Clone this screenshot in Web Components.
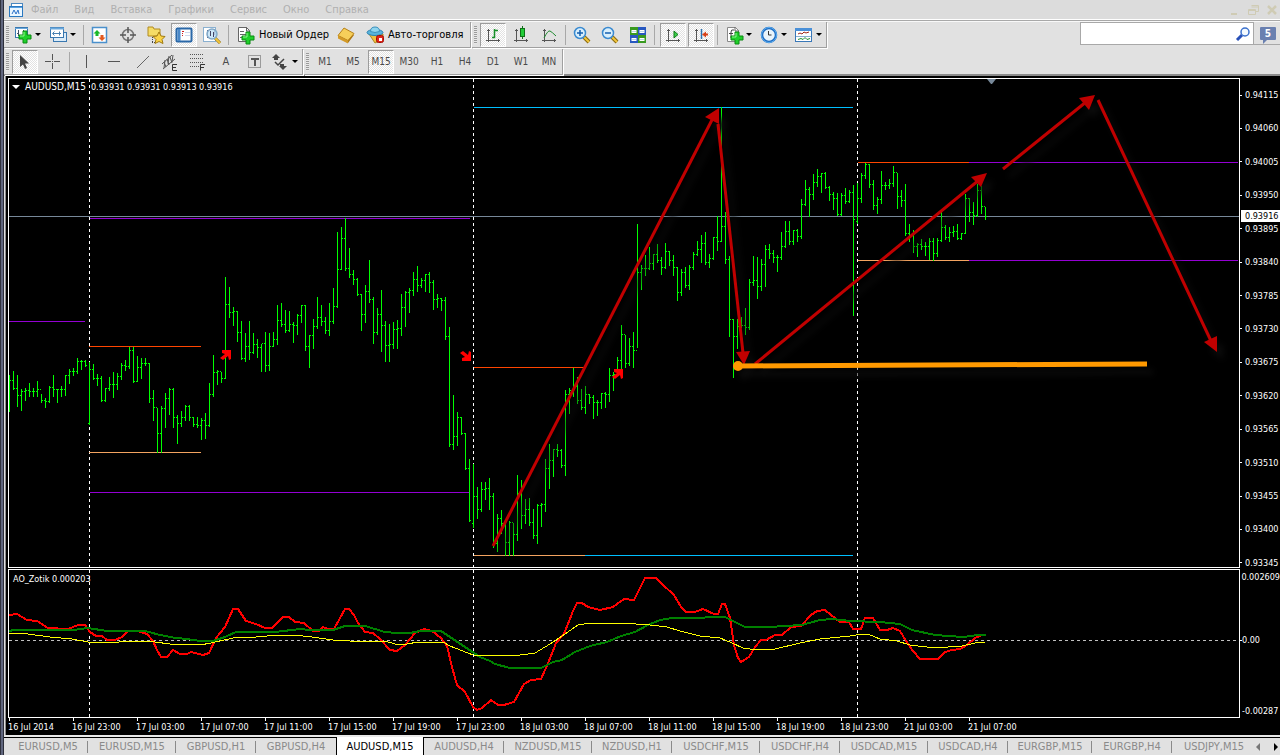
<!DOCTYPE html>
<html lang="ru">
<head>
<meta charset="utf-8">
<title>AUDUSD,M15</title>
<style>
html, body { margin: 0; height: 100%; background: #000; }
body { font: 11px/13px "DejaVu Sans Condensed", Roboto, sans-serif; }
</style>
</head>
<body>
<trade-app></trade-app>
<script>
const define = (name, html, setup) => {
  const tpl = document.createElement('template');
  tpl.innerHTML = html;
  customElements.define(name, class extends HTMLElement {
    constructor() {
      super();
      this.attachShadow({ mode: 'open' }).appendChild(tpl.content.cloneNode(true));
    }
    connectedCallback() {
      if (setup && !this.ready) { this.ready = true; setup(this, this.shadowRoot); }
    }
  });
};

const plus = (x, y) => `<path d="M${x + 4} ${y}h4v4h4v4h-4v4h-4v-4h-4v-4h4z" fill="#1fd02a" stroke="#0a8a12"/><path d="M${x + 5} ${y + 1}v4h-4" fill="none" stroke="#8df58d"/>`;
const lens = (inner) => `<path d="M12 12l5 5" stroke="#8a6a10" stroke-width="4"/><path d="M12 12l5 5" stroke="#f2c63c" stroke-width="2"/><circle cx="8" cy="8" r="5.500" fill="#d9effc" stroke="#3a8ad0" stroke-width="1.500"/><path d="${inner}" stroke="#1560b0" stroke-width="1.500" fill="none"/>`;
const axes = '<path d="M5.500 4v13M3 15.500h14M4 5.500h3M15.500 14v3" stroke="#555" fill="none"/>';
const page = '<path d="M3.500 2.500h8l3 3v11h-11z" fill="#fff" stroke="#888"/><path d="M11 2v4h4" fill="none" stroke="#666"/>';
const ICONS = {
  newchart: '<rect x="2.500" y="2.500" width="12" height="10" fill="#fff" stroke="#3a78b0"/><path d="M2 3.500h13" stroke="#6aa8dc"/><path d="M5.500 5v6M10.500 5v6M4 8.500h2M10 7.500h2" stroke="#456"/>' + plus(6, 6),
  profiles: '<rect x="5.500" y="7.500" width="13" height="9" fill="#dcecf8" stroke="#3a78b0"/><rect x="2.500" y="2.500" width="13" height="10" fill="#fff" stroke="#3a78b0"/><path d="M2 3.500h14" stroke="#6aa8dc" stroke-width="2"/><path d="M5 8.500h8M6.500 6.500l-2 2 2 2M11.500 6.500v4" fill="none" stroke="#4880b0"/>',
  market: '<rect x="2.500" y="2.500" width="14" height="15" fill="#fff" stroke="#4a90cc" stroke-width="1.500"/><path d="M7 5l3.500 3.500h-2v2.500h-3v-2.500h-2z" fill="#19b82a"/><path d="M12 16l3.500-3.500h-2v-2.500h-3v2.500h-2z" fill="#e25a20"/>',
  target: '<circle cx="10" cy="10" r="5.500" fill="none" stroke="#777" stroke-width="1.500"/><path d="M10 2v6M10 12v6M2 10h6M12 10h6" stroke="#555" stroke-width="1.500"/>',
  favorites: '<path d="M2 2h5l1 2h6v7h-12z" fill="#f5dc66" stroke="#b08a20"/><path d="M6.500 12v6M6 17.500h4" stroke="#444" stroke-dasharray="1 1"/><path d="M13 7l2 4 4 .5-3 3 1 4-4-2-4 2 1-4-3-3 4-.5z" fill="#fbd448" stroke="#a07a10"/>',
  navigator: '<rect x="2.500" y="3.500" width="15" height="13" rx="1" fill="#fff" stroke="#2a68a8" stroke-width="2"/><path d="M5 4v12" stroke="#4a88c8" stroke-width="3"/><path d="M8 6.500h2M8 8.500h1M8 10.500h1" stroke="#d02020"/><path d="M11 7.500h5M11 10.500h5" stroke="#ccd8ee"/>',
  tester: '<rect x="1.500" y="2.500" width="12" height="14" fill="#fff" stroke="#8ab0d0"/><path d="M5.500 5v8M12.500 4v6" stroke="#557"/><path d="M13 13l5 5" stroke="#8a6a10" stroke-width="3"/><path d="M13 13l5 5" stroke="#f2c63c" stroke-width="2"/><circle cx="10" cy="9" r="5" fill="#bfe0f6" fill-opacity=".8" stroke="#80a8c8" stroke-width="1.500"/><path d="M8.500 6v5M11.500 7v5" stroke="#446"/>',
  neworder: '<path d="M2.500 2.500h8l3 3v11h-11z" fill="#fff" stroke="#666"/><path d="M10.500 2v4h3M4 6.500h4M4 9.500h7M4 12.500h7" fill="none" stroke="#666"/>' + plus(6, 7),
  gold: '<path d="M2 12l6-8 10 6-6 8z" fill="#a87410"/><path d="M2 10.500l6-7.500 10 5.500-6 7z" fill="#f6cf5a" stroke="#b8821a"/><path d="M2 10.500l10 5v3l-10-5z" fill="#d39a28"/>',
  expert: '<path d="M4 9l6 9 8-4v-5z" fill="#f0c040" stroke="#b08820"/><ellipse cx="10" cy="7.500" rx="8" ry="3" fill="#58b4dc" stroke="#2a80b0"/><path d="M5.500 6.500q0-4.500 4.500-4.500t4.500 4.500q-4.500 2-9 0" fill="#8ed4ee" stroke="#3a90bc"/><rect x="11.500" y="10.500" width="7" height="7" rx="2" fill="#e02418" stroke="#a01008"/><rect x="14" y="13" width="3" height="3" fill="#fff"/>',
  bars: axes + '<path d="M11.500 4v9M9 12.500h3M12 5.500h3" stroke="#18902a" stroke-width="1.500"/>',
  candles: axes + '<path d="M11.500 1v13" stroke="#107018"/><rect x="9.500" y="3.500" width="4" height="8" fill="#22cc38" stroke="#107018"/>',
  line: axes + '<path d="M5 13q4-8 6-7t6 5" fill="none" stroke="#208a30"/>',
  zoomin: lens('M5 8h6M8 5v6'),
  zoomout: lens('M5 8h6'),
  tile: '<rect x="2" y="2" width="8" height="8" fill="#3a9a20"/><rect x="10" y="2" width="8" height="8" fill="#2858c0"/><rect x="2" y="10" width="8" height="8" fill="#2858c0"/><rect x="10" y="10" width="8" height="8" fill="#3a9a20"/><path d="M3.500 6.500h5M11.500 6.500h5M3.500 14.500h5M11.500 14.500h5" stroke="#fff" stroke-width="3"/><path d="M4 6.500h4M12 6.500h4M4 14.500h4M12 14.500h4" stroke="#b8d8e8"/>',
  autoscroll: axes + '<path d="M11 6l4 3.500-4 3.500z" fill="#38d048" stroke="#107818"/>',
  shift: axes + '<path d="M10.500 4v10" stroke="#2a70b0" stroke-width="1.500"/><path d="M11 9.500l4-3v2h2v2h-2v2z" fill="#d84018"/>',
  indicators: page + '<path d="M10 5q-3-1-3 2v6M5 8.500h4" fill="none" stroke="#444"/>' + plus(7, 7),
  clock: '<circle cx="10" cy="10" r="7" fill="#e8f4fc" stroke="#1c6cc4" stroke-width="2.500"/><circle cx="10" cy="10" r="7.500" fill="none" stroke="#60b0f0"/><path d="M9.500 6v4h3" fill="none" stroke="#333"/>',
  template: '<rect x="1.500" y="3.500" width="16" height="13" fill="#fff" stroke="#3a78b8"/><path d="M1 4.500h17" stroke="#4a90d8" stroke-width="3"/><path d="M2 11.500h15" stroke="#8ab0d0"/><path d="M4 9l2-1 2 1 2-2 2 1 3-1" fill="none" stroke="#a02818"/><path d="M4 14.500l3-1 2 1 2-2 2 2 3-1" fill="none" stroke="#209030"/>',
  cursor: '<path d="M5 3v12l3-2.500 2 4.500 2-1-2-4.500h4z" fill="#444"/>',
  cross: '<path d="M9.500 2v6M9.500 11v6M2 9.500h6M11 9.500h6" stroke="#555"/><rect x="9" y="9" width="1" height="1" fill="#555"/>',
  vline: '<path d="M10.500 3v13" stroke="#555"/>',
  hline: '<path d="M4 9.500h12" stroke="#555"/>',
  trend: '<path d="M5 16L17 4" stroke="#666"/>',
  channel: '<path d="M2 12L12 3M3 17L15 7M4 10l2 5M7 7l2 6M10 5l2 6M5 8l-1 8M9 4l-1 8M13 3l-1 7" stroke="#555"/><path d="M17 12.500h-4.500v6h4.500M12 15.500h4" fill="none" stroke="#333"/>',
  fibo: '<path d="M2 2.500h14M2 6.500h14M2 10.500h14M2 14.500h9" stroke="#555" stroke-dasharray="1 1"/><path d="M17 12.500h-4.500v6M12 15.500h4" fill="none" stroke="#333"/>',
  label: '<rect x="4.500" y="3.500" width="12" height="12" fill="none" stroke="#555" stroke-dasharray="1 1"/><path d="M7 6h8v2h-3v6h-2v-6h-3z" fill="#555"/>',
  arrows: '<path d="M2 6l4-4 4 4-2 0v2l-4 0v-2zM10 14l0-2h4v2h3l-4 4-4-4z" fill="#444"/><path d="M5 10l3 3 6-6" fill="none" stroke="#444" stroke-width="1.500"/>',
  minimize: '<path d="M5 12h6" stroke="#cfcbb4" stroke-width="2"/>',
  restore: '<path d="M6.500 3.500h7v6h-3M6.500 5h7M3.500 7.500h7v5h-7zM4 8.500h6" fill="none" stroke="#cfcbb4"/>',
  close: '<path d="M4 4l8 8M12 4l-8 8" stroke="#cfcbb4" stroke-width="2.500"/>',
  app: '<rect x="3.500" y="1.500" width="11" height="10" fill="#fff" stroke="#4a88c0"/><rect x="1.500" y="4.500" width="13" height="10" fill="#eaf6ff" stroke="#2a78c0"/><path d="M2 5.500h12" stroke="#58a0e0"/><path d="M4 12l2-4 2 4 2-4 1 4" fill="none" stroke="#2a70c8"/>',
  search: '<path d="M2 14l5-5" stroke="#2850b8" stroke-width="3"/><circle cx="10" cy="6" r="4" fill="#f4faff" stroke="#3a70cc" stroke-width="1.500"/>'
};

define('tool-icon', `<style>
:host { display: block; width: 20px; height: 20px; flex: none; }
:host([small]) { width: 16px; height: 16px; }
svg { display: block; width: 100%; height: 100%; }
</style><svg aria-hidden="true"></svg>`, (el, root) => {
  const svg = root.querySelector('svg');
  const s = el.hasAttribute('small') ? 16 : 20;
  svg.setAttribute('viewBox', `0 0 ${s} ${s}`);
  svg.innerHTML = ICONS[el.getAttribute('name')] || '';
});

define('tool-button', `<style>
:host { display: block; flex: none; width: 26px; height: 24px; }
:host([menu]) { width: 33px; }
:host([wide]) { width: 99px; }
:host([wider]) { width: 107px; }
button { box-sizing: border-box; width: 100%; height: 100%; margin: 0; padding: 0; border: 1px solid transparent; background: none; font: inherit; color: #4a4a4a; display: flex; align-items: center; justify-content: center; white-space: nowrap; }
:host([menu]) button { justify-content: flex-start; gap: 2px; }
:host([wide]) button, :host([wider]) button { justify-content: flex-start; gap: 3px; padding-left: 3px; color: #000; }
:host([pressed]) button { border-color: #9c9c9c #fff #fff #9c9c9c; background: repeating-conic-gradient(#fff 0 25%, #e2e2e2 0 50%) 0 0 / 2px 2px; }
i { display: none; border: 3px solid transparent; border-top-color: #000; border-bottom: 0; }
:host([menu]) i { display: block; }
</style><button type="button"><slot></slot><i></i></button>`, (el, root) => {
  const b = root.querySelector('button');
  const n = el.getAttribute('icon');
  if (n) {
    b.insertAdjacentHTML('afterbegin', `<tool-icon name="${n}"></tool-icon>`);
    if (!el.textContent.trim()) b.setAttribute('aria-label', n);
  }
  if (el.hasAttribute('pressed')) b.setAttribute('aria-pressed', 'true');
});

define('tool-sep', `<style>
:host { display: block; flex: none; width: 3px; height: 20px; }
:host([wide]) { width: 5px; }
span { display: block; width: 1px; height: 100%; margin-left: 1px; background: #a8a8a8; }
</style><span></span>`);

define('tool-bar', `<style>
:host { display: flex; flex: none; align-items: center; gap: 2px; height: 25px; padding: 0 2px; background: #e1e1e1; border-right: 1px solid #a0a0a0; border-bottom: 1px solid #a0a0a0; box-shadow: 1px 1px #fff; margin-right: 1px; }
:host([tight]) { padding-right: 0; }
.grip { flex: none; width: 3px; height: 18px; margin-right: 1px; background: repeating-linear-gradient(#9a9a9a 0 1px, #e8e8e8 1px 2px); }
</style><span class="grip"></span><slot></slot>`);

define('menu-bar', `<style>
:host { display: flex; align-items: center; height: 19px; padding: 0 0 0 4px; background: #dcdcdc; color: #b0b0b0; }
nav { display: flex; flex: 1; gap: 16px; margin-left: 7px; }
.win { display: flex; gap: 3px; }
button { margin: 0; padding: 0; border: 0; background: none; font: inherit; color: inherit; }
</style>
<tool-icon small name="app"></tool-icon>
<nav></nav>
<div class="win"><button aria-label="minimize"><tool-icon small name="minimize"></tool-icon></button><button aria-label="restore"><tool-icon small name="restore"></tool-icon></button><button aria-label="close"><tool-icon small name="close"></tool-icon></button></div>`,
(el, root) => {
  root.querySelector('nav').innerHTML = el.getAttribute('items').split('|').map(t => `<button type="button">${t}</button>`).join('');
});

define('search-box', `<style>
:host { display: flex; flex: none; height: 23px; width: 200px; }
label { box-sizing: border-box; display: flex; align-items: center; flex: 1; background: #fff; border: 1px solid #a8a8a8; padding-right: 2px; }
input { flex: 1; min-width: 0; border: 0; padding: 0 4px; margin: 0; outline: 0; font: inherit; background: none; }
button { flex: none; width: 26px; margin: 0; padding: 0 0 0 6px; border: 0; border-bottom: 1px solid #a8a8a8; background: #e1e1e1; font: bold 10px/14px "DejaVu Sans Condensed", sans-serif; color: #fff; text-align: left; }
span { display: block; position: relative; width: 16px; height: 13px; line-height: 13px; text-align: center; background: #6a80b0; border-radius: 1px; }
span::after { content: ""; position: absolute; left: 3px; top: 13px; border: 2px solid transparent; border-top-color: #6a80b0; border-left-color: #6a80b0; }
</style><label><input type="text" aria-label="search"><tool-icon small name="search"></tool-icon></label><button type="button"><span>5</span></button>`);

/* Each bar is high, low, close; a bar opens at the previous close. */
const BARS = `375 411 380,371 389 388,375 406 395,389 410 391,388 400 390,383 396 391,388 396 391,381 396 389,394 402 400,398 407 401,386 402 387,375 396 389,389 402 389,386 396 389,375 395 375,369 383 371,368 375 371,358 373 361,360 369 361,360 366 365,362 424 369,364 379 378,374 385 378,376 401 400,388 401 388,377 390 384,372 397 384,373 389 376,363 379 365,360 370 366,347 368 350,347 382 381,356 381 367,358 378 363,358 365 363,363 402 398,390 420 407,408 452 433,406 452 408,393 427 398,388 414 389,388 427 417,415 443 423,411 426 417,405 420 406,405 420 417,417 426 424,417 427 425,418 439 420,413 438 425,383 426 394,355 396 372,370 384 371,372 382 378,277 378 304,287 317 312,307 325 311,311 341 332,321 359 358,333 361 346,321 359 352,333 353 344,339 357 347,344 371 343,332 371 365,333 370 346,332 346 339,305 344 320,303 326 324,310 332 330,311 331 324,322 342 325,314 334 315,305 322 305,305 350 346,335 367 335,319 348 326,297 328 317,305 325 321,317 333 330,303 335 321,288 323 306,232 307 269,227 269 238,218 270 268,248 277 274,270 284 279,278 295 294,294 330 314,285 322 291,260 302 299,297 343 332,308 334 314,290 351 325,321 361 345,324 361 344,322 348 329,320 348 328,294 335 307,291 326 292,288 312 290,272 295 279,266 291 285,278 287 280,274 291 274,272 292 282,280 309 299,294 307 298,298 310 300,297 339 336,327 446 444,395 449 436,412 445 417,417 434 433,433 469 468,459 521 520,464 527 496,487 518 509,482 511 489,482 499 488,478 509 496,493 547 543,514 551 518,510 533 523,523 555 542,521 555 522,523 555 534,475 540 493,480 528 515,499 523 509,498 525 522,509 538 535,504 543 505,503 526 504,459 511 468,444 488 460,449 476 449,444 456 450,449 467 465,390 475 394,388 413 390,368 396 386,377 403 400,389 409 407,386 413 394,394 403 397,395 418 402,400 415 402,393 408 393,392 407 394,368 401 375,372 390 374,357 375 360,325 369 334,335 367 363,338 365 346,332 367 350,224 347 272,265 289 268,255 275 268,247 269 263,254 269 254,244 262 260,257 274 267,243 268 251,251 265 260,255 275 267,267 300 292,269 295 272,267 287 285,265 289 267,252 269 254,241 255 249,235 262 243,232 264 262,254 267 258,237 259 237,216 250 241,107 241 226,212 263 259,256 336 319,319 377 336,319 348 326,317 327 325,308 334 327,279 329 282,256 285 280,257 298 286,259 290 264,245 286 249,244 258 253,250 262 257,255 271 257,232 259 246,221 247 231,221 244 241,230 244 230,229 241 236,199 238 204,180 205 189,187 216 194,174 199 182,169 186 176,173 192 173,172 188 187,186 200 194,192 209 198,193 215 214,193 215 195,188 203 201,190 202 192,185 315 219,183 223 198,173 202 175,163 178 164,164 187 184,180 209 205,197 213 199,171 203 185,182 189 185,179 188 183,166 186 172,173 208 196,190 206 200,184 235 233,224 241 235,230 252 246,243 256 244,239 249 246,242 255 246,238 259 241,238 260 253,238 256 240,212 241 227,225 239 237,227 241 232,226 236 231,224 239 238,233 239 233,194 233 198,198 221 212,202 224 215,184 216 190,186 213 206,207 219 216`;
const GAP_OPENS = { 89: 423, 473: 523, 857: 221 };
const barPath = () => {
  let x = 9, prev = 0, d = '';
  for (const row of BARS.split(',')) {
    const [h, l, c] = row.split(' ').map(Number);
    const o = GAP_OPENS[x] || prev;
    d += `M${x} ${h}h1v${l - h + 1}h-1z`;
    if (o) d += `M${x - 1} ${o}h1v1h-1z`;
    d += `M${x + 1} ${c}h1v1h-1z`;
    prev = c; x += 4;
  }
  return d;
};
const LEVELS = [
  [9, 1239, 216, '#778899'], [90, 470, 218, '#9400d3'], [9, 85, 321, '#9400d3'], [90, 470, 492, '#9400d3'],
  [89, 201, 346, '#ff4500'], [89, 201, 452, '#f4a460'], [474, 585, 367, '#ff4500'], [474, 585, 555, '#f4a460'],
  [585, 853, 555, '#00bfff'], [474, 853, 107, '#00bfff'], [858, 969, 162, '#ff4500'], [969, 1238, 162, '#9400d3'],
  [858, 969, 260, '#f4a460'], [969, 1238, 260, '#9400d3']
];
const days = (y, h) => [89, 473, 857].map(x => `<path d="M${x}.5 ${y}v${h}" stroke="#fff" stroke-dasharray="3 3"/>`).join('');
const trendArrow = (line, head) => `<path d="${line}" stroke="#c00000" stroke-width="3" fill="none"/><path d="${head}z" fill="#c00000"/>`;
const signal = (x, y, flip) => `<path transform="translate(${x} ${y})${flip ? ' scale(1 -1)' : ''}" d="M2 -5h9v9l-2 1-1-4-5 4-3-2 5-4-3-1z" fill="#f00"/>`;

define('price-chart', `<style>
:host { display: block; min-width: 0; flex: 1; box-sizing: border-box; border: 1px solid #fff; position: relative; background: #000; color: #fff; overflow: hidden; }
svg { display: block; position: absolute; inset: 0; width: 100%; height: 100%; }
header { position: absolute; z-index: 1; left: 3px; top: 2px; display: flex; align-items: center; gap: 5px; font-size: 10px; line-height: 12px; white-space: nowrap; }
header i { border: 4px solid transparent; border-top-color: #fff; border-bottom: 0; }
header small { font-size: 9px; }
</style><header><i></i><span>AUDUSD,M15</span><small>0.93931 0.93931 0.93913 0.93916</small></header>
<svg viewBox="9 79 1230 488" preserveAspectRatio="none" role="img" aria-label="AUDUSD"></svg>`, (el, root) => {
  root.querySelector('svg').innerHTML =
    `<g shape-rendering="crispEdges">${days(79, 488)}` +
    LEVELS.map(([a, b, y, c]) => `<rect x="${a}" y="${y}" width="${b - a}" height="1" fill="${c}"/>`).join('') +
    `<path d="${barPath()}" fill="#0f0"/></g>` +
    '<path d="M987 79h9l-4 5h-1z" fill="#778899"/>' +
    signal(220, 355) + signal(460, 356, true) + signal(612, 374) +
    '<g style="filter:drop-shadow(6px 8px 3px #0c0c0c)">' +
    trendArrow('M493 546L714 116', 'M719 108L705 117L719 124') +
    trendArrow('M718 124L743 353', 'M744 365L736 352L750 351') +
    trendArrow('M755 364L979 180', 'M987 173L971 177L981 187') +
    trendArrow('M1003 169L1086 102', 'M1095 95L1079 98L1089 110') +
    trendArrow('M1098 100L1211 341', 'M1217 352L1204 342L1217 336') +
    '<path d="M738 366L1147 364" stroke="#ff9900" stroke-width="5"/><circle cx="738" cy="366" r="5" fill="#ff9900"/></g>';
});

define('oscillator-chart', `<style>
:host { display: block; min-width: 0; flex: 1; box-sizing: border-box; border: 1px solid #fff; position: relative; background: #000; color: #fff; overflow: hidden; }
svg { display: block; position: absolute; inset: 0; width: 100%; height: 100%; }
header { position: absolute; left: 4px; top: 3px; font-size: 9px; line-height: 12px; white-space: nowrap; }
</style><header>AO_Zotik 0.000203</header>
<svg viewBox="9 570 1230 147" preserveAspectRatio="none" role="img" aria-label="AO_Zotik">
<g fill="none" shape-rendering="crispEdges">
<path d="M9 640.500H1239" stroke="#c0c0c0" stroke-dasharray="3 3"/>
<polyline stroke="#ff0000" stroke-width="2" points="9,615 17,614 27,620 37,621 48,628 68,629 78,625 85,625 90,632 96,636 102,636 107,640 115,640 122,637 128,631 138,631 147,634 153,641 157,650 161,657 167,657 173,650 180,654 187,654 191,652 203,655 209,653 216,638 225,627 233,609 238,609 246,621 256,624 265,628 272,628 283,617 289,617 295,622 304,623 313,631 319,631 323,627 328,629 334,629 345,609 349,609 354,615 358,623 365,632 373,633 380,639 390,650 397,651 405,645 415,633 424,629 432,631 441,638 447,646 452,667 457,685 465,692 473,707 477,710 482,708 491,700 498,705 504,705 514,702 524,684 531,680 541,679 549,661 556,643 564,634 573,611 577,603 582,603 588,607 600,610 613,607 624,599 634,600 645,578 656,578 662,584 674,595 681,607 686,612 695,612 703,609 714,614 718,614 722,604 725,604 730,618 734,645 738,658 741,662 749,657 755,647 761,640 766,640 775,635 782,635 791,627 801,626 811,615 817,611 825,610 831,615 840,622 849,622 853,629 861,629 865,618 873,618 880,630 887,630 893,628 900,631 906,641 913,651 920,659 938,659 945,652 952,650 960,649 967,645 975,638 982,635"/>
<polyline stroke="#008000" stroke-width="2" points="9,631 14,630 73,630 88,628 107,631 145,631 160,635 176,638 187,639 200,641 213,641 225,637 236,632 275,632 300,629 310,630 333,630 345,626 365,626 385,632 397,633 410,633 420,631 441,631 453,639 468,649 480,657 490,661 495,664 510,668 541,668 553,662 562,660 575,652 590,646 607,642 621,636 635,632 648,625 660,620 672,618 700,618 710,617 725,617 735,622 745,627 770,627 785,626 802,625 820,620 833,619 850,621 880,622 900,624 912,630 935,635 963,637 978,635 986,635"/>
<polyline stroke="#ffff00" points="9,633 28,634 50,637 72,639 88,642 110,643 128,641 155,642 170,644 183,644 200,645 211,643 233,638 256,637 278,635 294,635 312,637 333,640 350,641 385,641 395,644 407,644 418,642 443,642 450,646 473,655 513,656 535,653 550,644 565,634 578,625 590,623 622,623 650,625 667,627 680,631 700,636 720,638 732,643 743,648 757,650 775,649 800,643 820,639 850,636 862,634 868,634 880,639 897,641 910,645 935,648 962,646 975,643 985,642"/>
</g></svg>`, (el, root) => {
  root.querySelector('svg g').insertAdjacentHTML('afterbegin', days(570, 147));
});

define('price-axis', `<style>
:host { box-sizing: border-box; position: relative; display: flex; flex-direction: column; justify-content: space-between; flex: none; width: 40px; padding-top: 12px; color: #fff; font-size: 9px; line-height: 10px; white-space: nowrap; overflow: hidden; }
span, b { display: flex; align-items: center; gap: 3px; }
span::before { content: ""; width: 2px; height: 1px; background: #fff; }
b { position: absolute; left: 1px; right: 0; top: 27%; height: 12px; padding-left: 4px; background: #fff; color: #000; font-weight: normal; }
:host([osc]) { padding: 3px 0 2px; }
:host([osc]) span { gap: 0; }
:host([osc]) span:nth-of-type(2) { margin-bottom: 8px; }
:host([osc]) span:nth-of-type(2n+1)::before { background: none; }
</style><slot></slot>`, (el, root) => {
  root.innerHTML += el.getAttribute('values').split(' ').map(v => `<span>${v}</span>`).join('') +
    (el.hasAttribute('current') ? `<b>${el.getAttribute('current')}</b>` : '');
});

define('time-axis', `<style>
:host { display: grid; grid-template-columns: repeat(15, minmax(0, 64fr)) minmax(0, 271fr); flex: none; height: 17px; margin-right: 41px; color: #fff; font-size: 9px; line-height: 12px; white-space: nowrap; }
span::before { content: ""; display: block; width: 1px; height: 3px; margin-left: 1px; background: #fff; }
</style>`, (el, root) => {
  root.innerHTML += el.getAttribute('values').split('|').map(v => `<span>${v}</span>`).join('');
});

define('chart-tabs', `<style>
:host { display: flex; flex: none; height: 17px; padding-left: 4px; border-top: 1px solid #000; box-shadow: 0 -2px #e8e8e8; background: #e1e1e1; color: #8a8a8a; }
button { flex: none; box-sizing: border-box; width: 80px; height: 17px; margin: 0; padding: 0; border: 0; background: linear-gradient(#8a8a8a, #8a8a8a) right 3px / 1px 12px no-repeat; font: inherit; color: inherit; white-space: nowrap; }
.m { width: 88px; }
.s { width: 84px; }
[aria-selected=true] { height: 18px; margin-top: -1px; background: #fff; border: solid #000; border-width: 0 1px; color: #000; }
.end { background: none; }
nav { display: flex; flex: 1; align-items: center; justify-content: flex-end; gap: 14px; padding-right: 2px; }
i { border: 4px solid transparent; border-left: 0; border-right-color: #777; }
i + i { border: 4px solid transparent; border-right: 0; border-left-color: #000; }
</style>
<button role="tab">EURUSD,M5</button><button role="tab" class="m">EURUSD,M15</button><button role="tab">GBPUSD,H1</button><button role="tab" class="end">GBPUSD,H4</button><button role="tab" class="m" aria-selected="true">AUDUSD,M15</button><button role="tab">AUDUSD,H4</button><button role="tab" class="m">NZDUSD,M15</button><button role="tab">NZDUSD,H1</button><button role="tab" class="m">USDCHF,M15</button><button role="tab">USDCHF,H4</button><button role="tab" class="m">USDCAD,M15</button><button role="tab">USDCAD,H4</button><button role="tab" class="s">EURGBP,M15</button><button role="tab">EURGBP,H4</button><button role="tab" class="s end">USDJPY,M15</button><nav><i></i><i></i></nav>`);

define('trade-app', `<style>
:host { display: flex; height: 100vh; overflow: hidden; background: #000; }
.edge { flex: none; width: 4px; background: linear-gradient(90deg, #30323e 1px, #60667e 1px 3px, #2c2e3a 3px); }
.win { flex: 1; min-width: 0; display: flex; flex-direction: column; }
.bars { display: flex; flex: none; background: #e1e1e1; border-top: 1px solid #fff; box-shadow: inset 0 1px #a8a8a8, inset 0 2px #f8f8f8; padding-top: 2px; height: 52px; border-bottom: 2px solid #8c8c8c; }
.rows { flex: 1; min-width: 0; display: flex; flex-direction: column; gap: 1px; }
.row { display: flex; }
.chart { flex: 1; min-height: 0; display: flex; flex-direction: column; padding: 2px 0 2px 3px; border-left: 1px solid #e0e0e0; box-shadow: inset 1px 0 #8c8c8c; font-size: 9px; }
.pane { display: flex; min-height: 0; flex: 490 1 0; }
.pane.low { flex: 149 1 0; margin-top: 1px; }
.frames { font-size: 10px; }
</style>
<div class="edge"></div>
<div class="win">
<menu-bar items="Файл|Вид|Вставка|Графики|Сервис|Окно|Справка"></menu-bar>
<div class="bars"><div class="rows">
<div class="row">
<tool-bar><tool-button menu icon="newchart"></tool-button><tool-button menu icon="profiles"></tool-button><tool-sep></tool-sep><tool-button icon="market"></tool-button><tool-button icon="target"></tool-button><tool-button icon="favorites"></tool-button><tool-button pressed icon="navigator"></tool-button><tool-button icon="tester"></tool-button><tool-sep></tool-sep><tool-button wide icon="neworder">Новый Ордер</tool-button><tool-button icon="gold"></tool-button><tool-button wider icon="expert">Авто-торговля</tool-button></tool-bar>
<tool-bar tight><tool-button pressed icon="bars"></tool-button><tool-button icon="candles"></tool-button><tool-button icon="line"></tool-button><tool-sep></tool-sep><tool-button icon="zoomin"></tool-button><tool-button icon="zoomout"></tool-button><tool-button icon="tile"></tool-button><tool-sep wide></tool-sep><tool-button pressed icon="autoscroll"></tool-button><tool-button pressed icon="shift"></tool-button><tool-sep wide></tool-sep><tool-button menu icon="indicators"></tool-button><tool-button menu icon="clock"></tool-button><tool-button menu icon="template"></tool-button></tool-bar>
</div>
<div class="row">
<tool-bar tight><tool-button pressed icon="cursor"></tool-button><tool-button icon="cross"></tool-button><tool-sep></tool-sep><tool-button icon="vline"></tool-button><tool-button icon="hline"></tool-button><tool-button icon="trend"></tool-button><tool-button icon="channel"></tool-button><tool-button icon="fibo"></tool-button><tool-button>A</tool-button><tool-button icon="label"></tool-button><tool-button menu icon="arrows"></tool-button></tool-bar>
<tool-bar tight class="frames"><tool-button>M1</tool-button><tool-button>M5</tool-button><tool-button pressed>M15</tool-button><tool-button>M30</tool-button><tool-button>H1</tool-button><tool-button>H4</tool-button><tool-button>D1</tool-button><tool-button>W1</tool-button><tool-button>MN</tool-button></tool-bar>
</div></div>
<search-box></search-box>
</div>
<div class="chart">
<div class="pane"><price-chart></price-chart><price-axis current="0.93916" values="0.94115 0.94060 0.94005 0.93950 0.93895 0.93840 0.93785 0.93730 0.93675 0.93620 0.93565 0.93510 0.93455 0.93400 0.93345"></price-axis></div>
<div class="pane low"><oscillator-chart></oscillator-chart><price-axis osc values="0.002609 0.00 -0.00287"></price-axis></div>
<time-axis values="16 Jul 2014|16 Jul 23:00|17 Jul 03:00|17 Jul 07:00|17 Jul 11:00|17 Jul 15:00|17 Jul 19:00|17 Jul 23:00|18 Jul 03:00|18 Jul 07:00|18 Jul 11:00|18 Jul 15:00|18 Jul 19:00|18 Jul 23:00|21 Jul 03:00|21 Jul 07:00"></time-axis>
</div>
<chart-tabs role="tablist"></chart-tabs>
</div>`);
</script>
</body>
</html>
